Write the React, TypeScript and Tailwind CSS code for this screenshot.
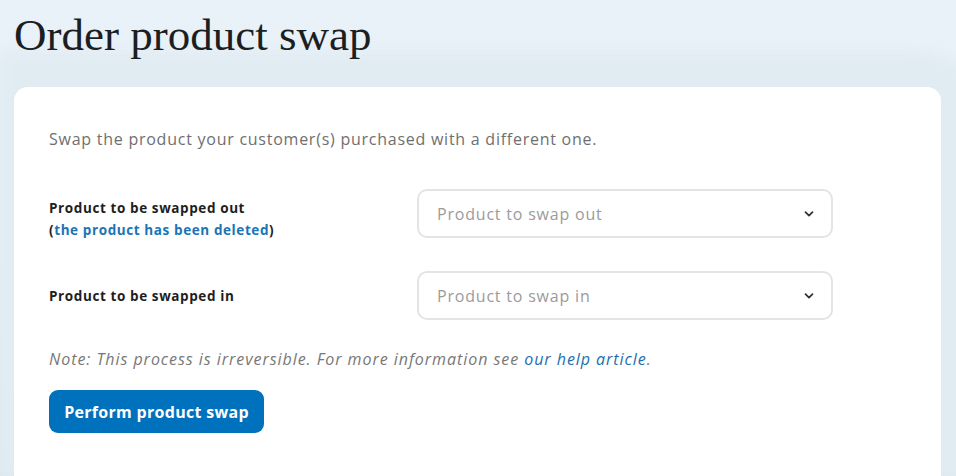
import React from "react";

function Chevron() {
  return (
    <svg width="12" height="12" viewBox="0 0 12 12" fill="none">
      <path d="M2.5 4.2 L6 7.6 L9.5 4.2" stroke="#333" strokeWidth="1.8" strokeLinecap="round" strokeLinejoin="round" />
    </svg>
  );
}

function Select({ placeholder }: { placeholder: string }) {
  return (
    <div className="w-[416px] h-[49px] rounded-[10px] border-2 border-[#e4e4e4] bg-white flex items-center justify-between pl-[18px] pr-[16px]">
      <span className="text-[16px] text-[#9b9b9b] tracking-[0.8px]">{placeholder}</span>
      <Chevron />
    </div>
  );
}

export default function App() {
  return (
    <div
      className="w-[956px] h-[476px] overflow-hidden relative bg-gradient-to-b from-[#eaf2f9] via-[#e6eff6] to-[#dce8f0]"
      style={{ fontFamily: "'Open Sans', 'Noto Sans', sans-serif" }}
    >
      <div className="absolute left-0 right-[-40px] top-[52px] bottom-0 rounded-tr-[80px] bg-[#e1ebf2] blur-[6px]" />
      <div className="relative flex flex-col">
        <h1
          className="pl-[14px] pt-[9px] h-[87px] text-[45px] leading-[52px] text-[#1c1f22]"
          style={{ fontFamily: "'Liberation Serif', serif" }}
        >
          Order product swap
        </h1>
        <div className="ml-[14px] w-[927px] h-[389px] bg-white rounded-t-[14px] pl-[35px] pt-[40px]">
          <p className="text-[16px] leading-[24px] text-[#6f6f6f] tracking-[0.75px]">
            Swap the product your customer(s) purchased with a different one.
          </p>
          <div className="mt-[38px] flex items-start">
            <div className="w-[368px] pt-[8px] text-[13.5px] leading-[22px] font-bold text-[#1e1e1e] tracking-[0.6px]">
              <div>Product to be swapped out</div>
              <div>
                (<span className="text-[#1a74b5]">the product has been deleted</span>)
              </div>
            </div>
            <Select placeholder="Product to swap out" />
          </div>
          <div className="mt-[30px] flex items-center">
            <div className="w-[368px] text-[13.5px] leading-[22px] font-bold text-[#1e1e1e] tracking-[0.6px]">
              Product to be swapped in
            </div>
            <Select placeholder="Product to swap in" />
          </div>
          <p className="mt-[27px] text-[16px] leading-[24px] italic text-[#777] tracking-[0.95px]">
            Note: This process is irreversible. For more information see{" "}
            <span className="text-[#1a6fae]">our help article</span>.
          </p>
          <button className="mt-[19px] h-[43px] w-[215px] rounded-[9px] bg-[#0071bd] text-white text-[16px] font-bold tracking-[0.3px]">
            Perform product swap
          </button>
        </div>
      </div>
    </div>
  );
}
